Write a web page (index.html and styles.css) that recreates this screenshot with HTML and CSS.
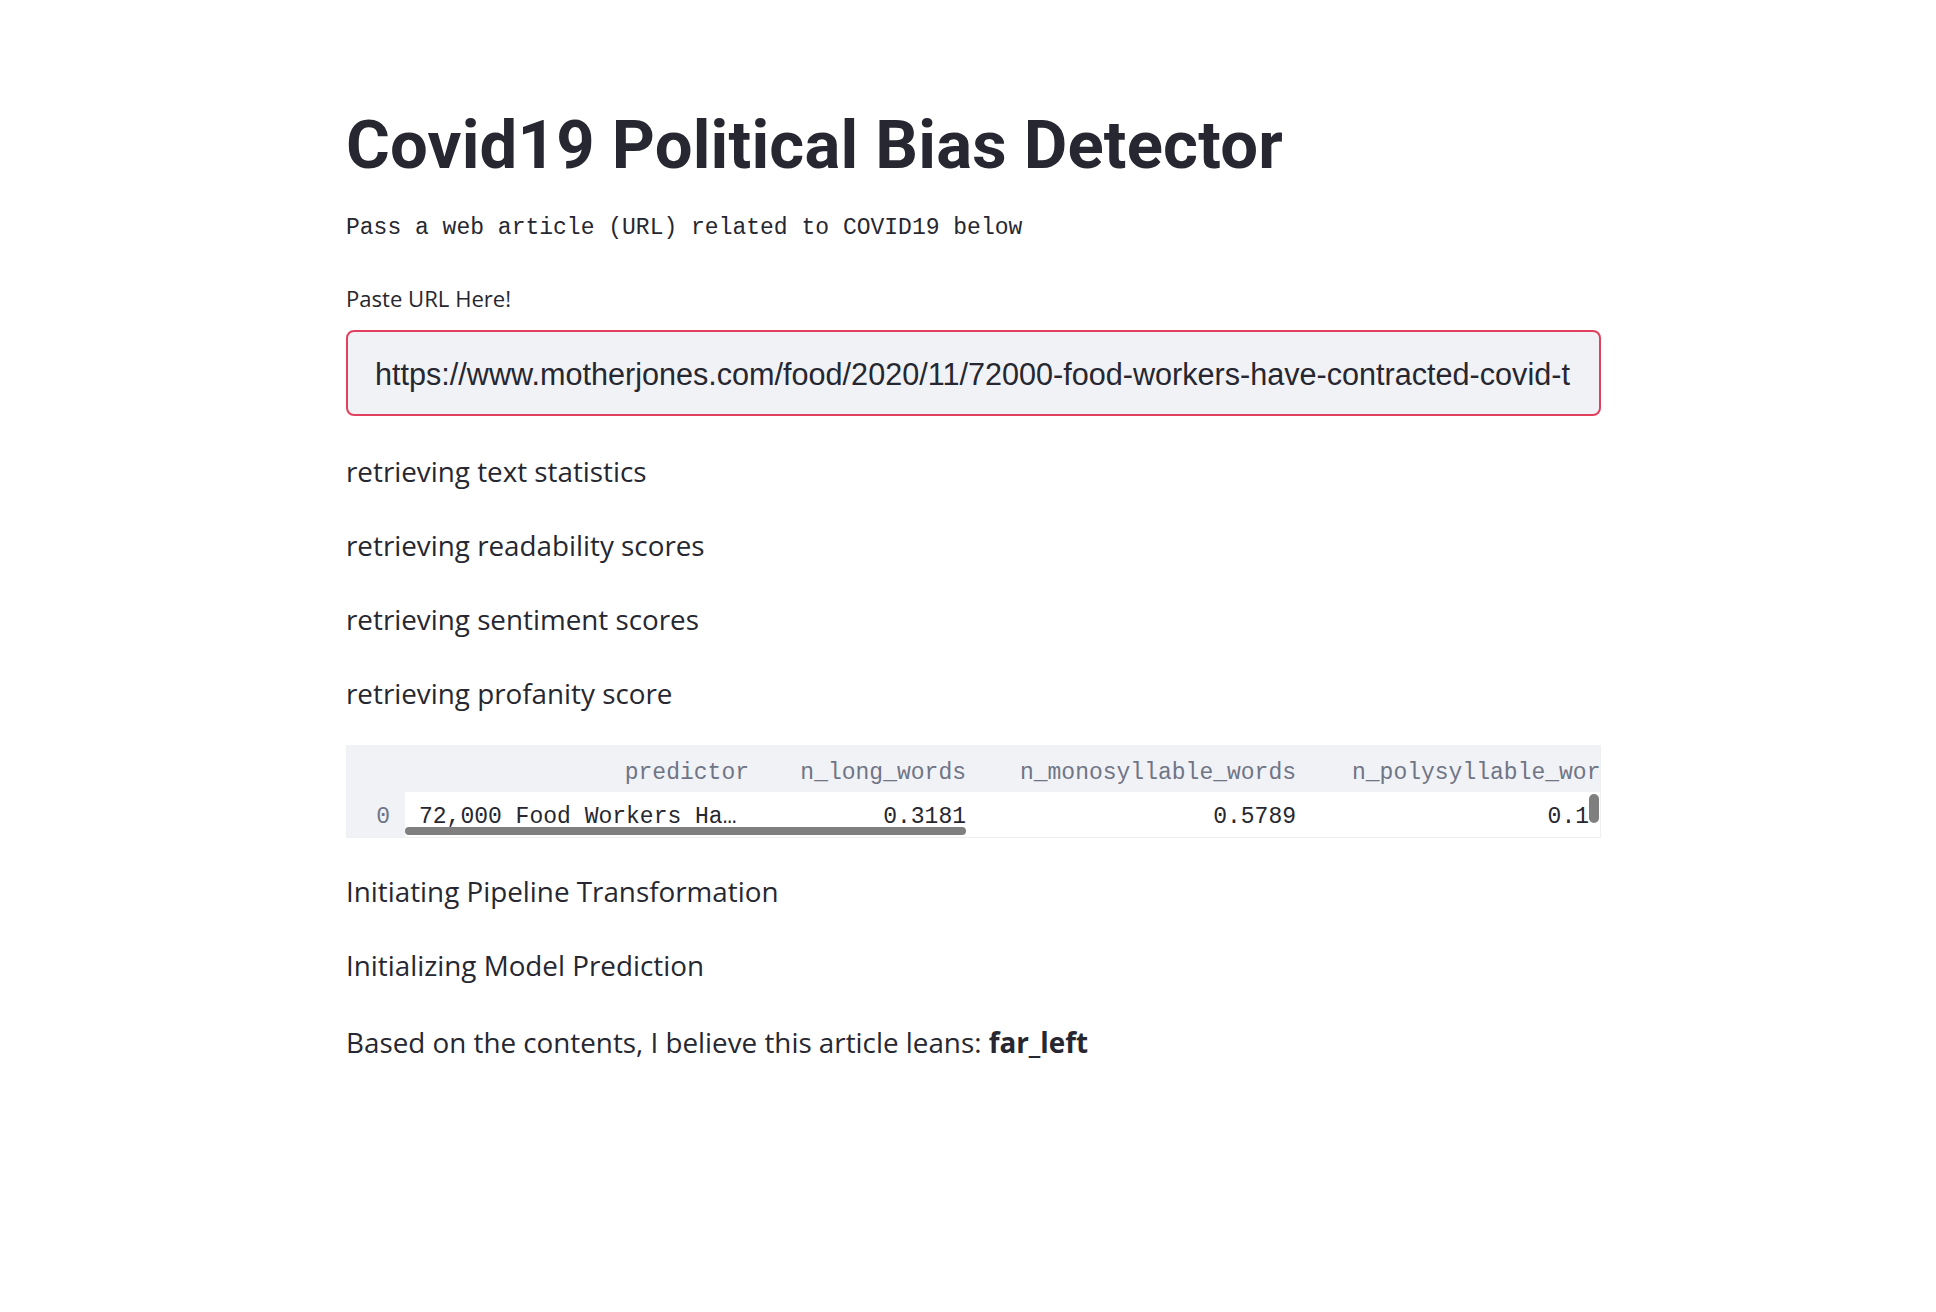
FILE: index.html
```html
<!DOCTYPE html>
<html lang="en">
<head>
<meta charset="utf-8">
<title>Covid19 Political Bias Detector</title>
<link rel="stylesheet" href="styles.css">
</head>
<body>
<main class="main">
  <h1 class="title">Covid19 Political Bias Detector</h1>
  <pre class="subtitle">Pass a web article (URL) related to COVID19 below</pre>
  <label class="label">Paste URL Here!</label>
  <div class="input-box">
    <span class="input-text">https://www.motherjones.com/food/2020/11/72000-food-workers-have-contracted-covid-t</span>
  </div>
  <p class="status">retrieving text statistics</p>
  <p class="status">retrieving readability scores</p>
  <p class="status">retrieving sentiment scores</p>
  <p class="status">retrieving profanity score</p>
  <div class="table-wrap">
    <div class="trow thead">
      <div class="cell c-idx"></div>
      <div class="cell c-pred">predictor</div>
      <div class="cell c-long">n_long_words</div>
      <div class="cell c-mono">n_monosyllable_words</div>
      <div class="cell c-poly">n_polysyllable_wor</div>
    </div>
    <div class="trow tbody">
      <div class="cell c-idx idx">0</div>
      <div class="cell c-pred left">72,000 Food Workers Ha…</div>
      <div class="cell c-long">0.3181</div>
      <div class="cell c-mono">0.5789</div>
      <div class="cell c-poly">0.1</div>
    </div>
    <div class="hscroll"></div>
    <div class="vscroll"></div>
  </div>
  <p class="status after">Initiating Pipeline Transformation</p>
  <p class="status">Initializing Model Prediction</p>
  <p class="status last">Based on the contents, I believe this article leans: <strong>far_left</strong></p>
</main>
</body>
</html>
```
FILE: styles.css
```css
html, body {
  margin: 0;
  padding: 0;
  background: #ffffff;
}
body {
  color: #262730;
  font-family: "Open Sans", "Liberation Sans", sans-serif;
}
.main {
  width: 1255px;
  margin-left: 346px;
  padding-top: 105px;
}
.title {
  margin: 0;
  font-family: Roboto, "Liberation Sans", sans-serif;
  font-size: 67px;
  line-height: 80px;
  font-weight: 700;
  letter-spacing: 0.2px;
}
.subtitle {
  margin: 25px 0 0;
  font-family: "Liberation Mono", "DejaVu Sans Mono", monospace;
  font-size: 23px;
  line-height: 36px;
}
.label {
  display: block;
  margin-top: 37px;
  font-size: 22.1px;
  line-height: 30px;
}
.input-box {
  margin-top: 17px;
  height: 82px;
  border: 2px solid #e2405f;
  border-radius: 8px;
  background: #f0f2f6;
  display: flex;
  align-items: center;
  padding: 0 27px 0 27px;
  overflow: hidden;
  white-space: nowrap;
}
.input-text {
  font-family: "Liberation Sans", Arial, sans-serif;
  font-size: 30.6px;
  color: #262730;
  padding-top: 2px;
}
.status {
  margin: 34px 0 0;
  font-size: 27.8px;
  line-height: 40px;
}
.status strong {
  font-weight: 700;
}
.input-box + .status {
  margin-top: 35px;
}
.table-wrap {
  position: relative;
  margin-top: 32px;
  overflow: hidden;
  border: 1px solid #eef0f4;
  border-top: none;
  font-family: "Liberation Mono", "DejaVu Sans Mono", monospace;
  font-size: 23px;
}
.trow {
  display: flex;
  white-space: nowrap;
}
.thead {
  height: 47px;
  box-sizing: border-box;
  padding-top: 9px;
  background: #f0f2f6;
  color: #707586;
  align-items: center;
}
.tbody {
  height: 45px;
  background: #ffffff;
}
.cell {
  flex: none;
  text-align: right;
  padding-right: 12px;
  box-sizing: border-box;
}
.tbody .cell {
  display: flex;
  align-items: center;
  justify-content: flex-end;
  padding-top: 5px;
}
.tbody .left {
  justify-content: flex-start;
  padding-left: 14px;
}
.c-idx { width: 58px; }
.tbody .c-idx { background: #f0f2f6; color: #707586; padding-right: 15px; }
.c-pred { width: 356px; }
.c-long { width: 217px; }
.c-mono { width: 330px; }
.c-poly { width: 294px; }
.thead .c-poly { text-align: left; padding-left: 44px; padding-right: 0; }
.tbody .c-poly { padding-right: 13px; }
.hscroll {
  position: absolute;
  left: 58px;
  width: 561px;
  bottom: 2px;
  height: 8px;
  border-radius: 4px;
  background: #7f7f7f;
}
.vscroll {
  position: absolute;
  right: 1px;
  top: 49px;
  width: 10px;
  height: 29px;
  border-radius: 5px;
  background: #7f7f7f;
}
.status.after {
  margin-top: 33px;
}
.status.last {
  margin-top: 37px;
}
```
